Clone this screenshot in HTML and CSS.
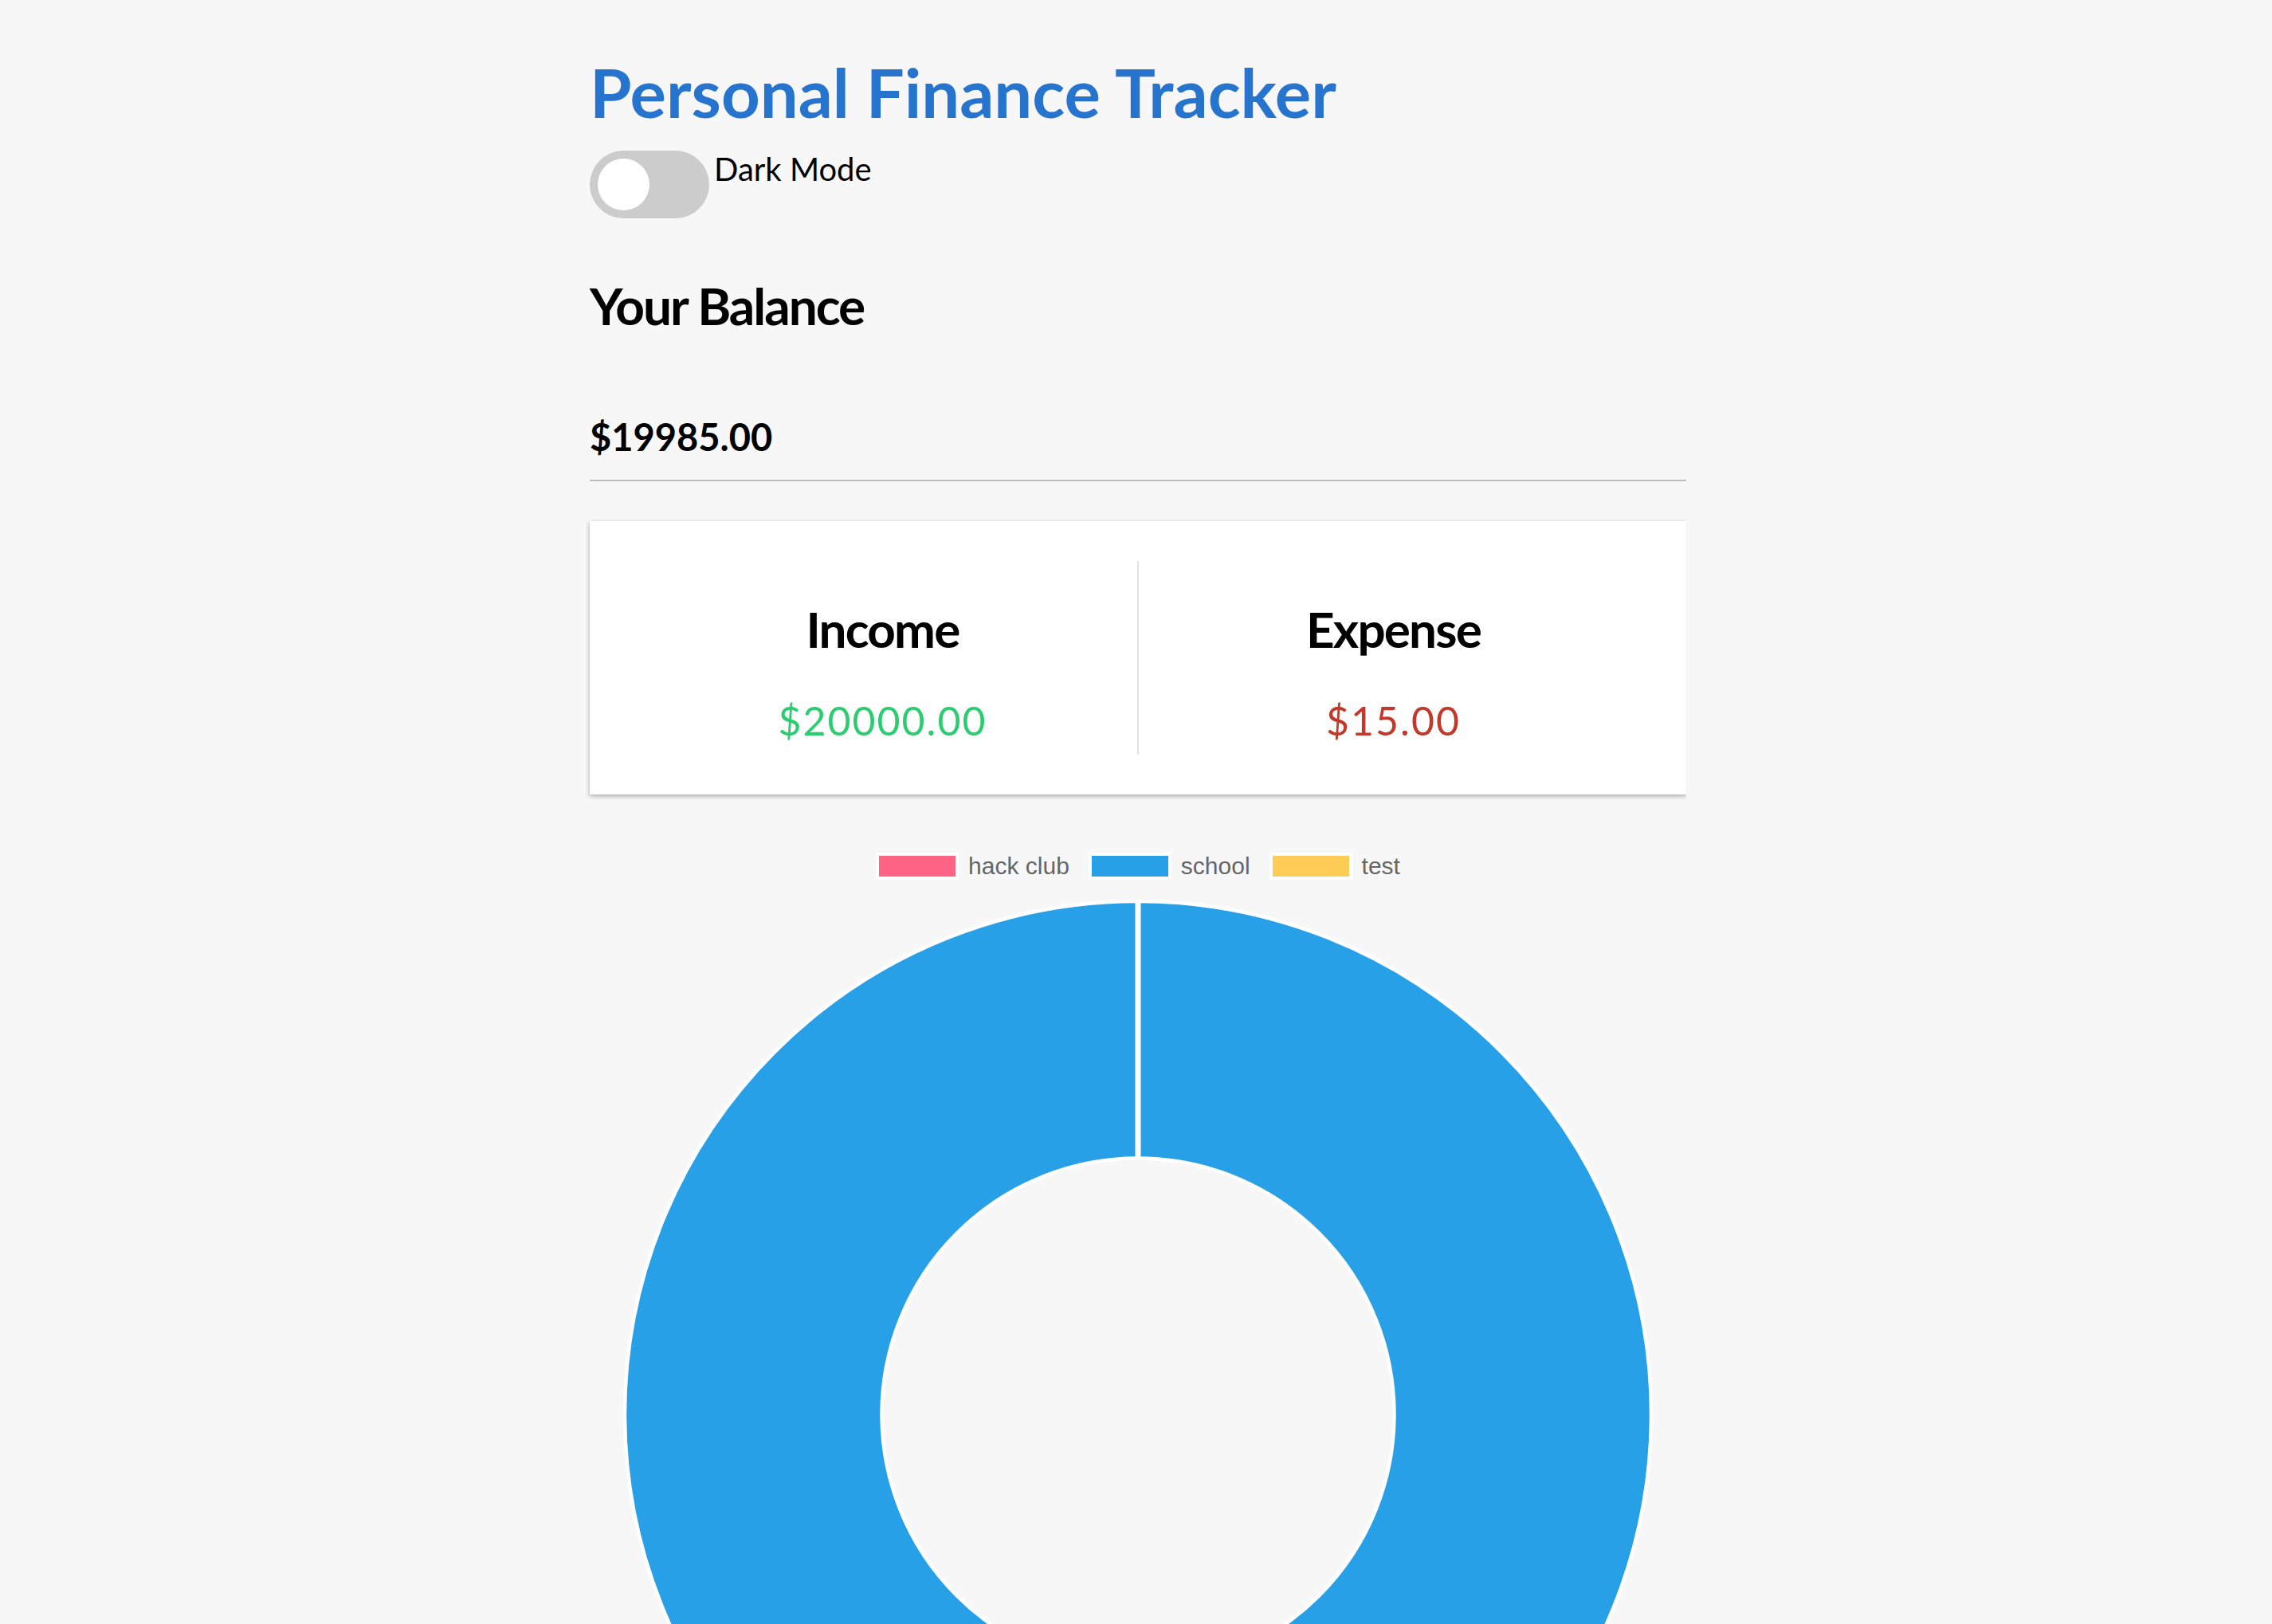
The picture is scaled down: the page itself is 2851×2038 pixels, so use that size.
FILE: index.html
```html
<!DOCTYPE html>
<html lang="en">
<head>
<meta charset="utf-8">
<title>Personal Finance Tracker</title>
<link rel="stylesheet" href="styles.css">
</head>
<body>
<div class="app">
  <h1 class="title">Personal Finance Tracker</h1>
  <div class="mode-row">
    <span class="toggle"><span class="knob"></span></span>
    <span class="mode-label">Dark Mode</span>
  </div>
  <h2 class="balance-title">Your Balance</h2>
  <div class="balance">$19985.00</div>
  <div class="rule"></div>
  <div class="card">
    <div class="col col-left">
      <h4 class="col-title">Income</h4>
      <p class="money plus">$20000.00</p>
    </div>
    <div class="col">
      <h4 class="col-title">Expense</h4>
      <p class="money minus">$15.00</p>
    </div>
  </div>
  <div class="legend">
    <div class="legend-item"><span class="swatch pink"></span><span class="legend-text">hack club</span></div>
    <div class="legend-item"><span class="swatch blue"></span><span class="legend-text">school</span></div>
    <div class="legend-item"><span class="swatch yellow"></span><span class="legend-text">test</span></div>
  </div>
  <div class="chart">
    <svg class="donut" width="1300" height="1300" viewBox="-650 -650 1300 1300">
      <path d="M0,-644 A644,644 0 1,1 0,644 A644,644 0 1,1 0,-644 Z M0,-321.5 A321.5,321.5 0 1,0 0,321.5 A321.5,321.5 0 1,0 0,-321.5 Z" fill="#28a0e8" fill-rule="evenodd" stroke="#ffffff" stroke-width="4.5"/>
      <line x1="0" y1="-646" x2="0" y2="-319" stroke="#ffffff" stroke-width="7"/>
    </svg>
  </div>
</div>
</body>
</html>
```

FILE: styles.css
```css
html, body {
  margin: 0;
  padding: 0;
}

body {
  background: #f7f7f7;
  font-family: Lato, "Open Sans", sans-serif;
  color: #000;
}

.app {
  box-sizing: content-box;
  width: 1376px;
  margin: 0 auto;
  padding: 65px 0 0 5px;
  height: 1973px;
  overflow: hidden;
}

.title {
  margin: 0;
  font-size: 85px;
  line-height: 100px;
  font-weight: 700;
  color: #2674cd;
}

.mode-row {
  display: flex;
  align-items: flex-start;
  gap: 6px;
  margin-top: 24px;
}

.toggle {
  position: relative;
  display: block;
  width: 150px;
  height: 85px;
  border-radius: 43px;
  background: #cccccc;
  flex: none;
}

.knob {
  position: absolute;
  left: 10px;
  top: 10px;
  width: 65px;
  height: 65px;
  border-radius: 50%;
  background: #ffffff;
}

.mode-label {
  font-size: 40px;
  line-height: 46px;
}

.balance-title {
  margin: 72px 0 0;
  font-size: 64px;
  line-height: 1.2;
  font-weight: 700;
  letter-spacing: -2px;
}

.balance {
  margin-top: 97px;
  font-size: 47px;
  line-height: 57px;
  font-weight: 700;
}

.rule {
  margin-top: 25px;
  border-top: 2px solid #bdbdbd;
}

.card {
  display: flex;
  margin-top: 50px;
  padding: 50px 48px;
  background: #ffffff;
  box-shadow: 0 2px 7px rgba(0, 0, 0, 0.14), 0 2px 5px rgba(0, 0, 0, 0.2);
}

.col {
  flex: 1;
  text-align: center;
  padding: 48px 0 13px;
}

.col-left {
  border-right: 2px solid #e2e2e2;
}

.col-title {
  margin: 0 0 48px;
  font-size: 62px;
  line-height: 1.2;
  font-weight: 700;
  letter-spacing: -1.8px;
}

.money {
  margin: 0;
  font-size: 50px;
  line-height: 60px;
  letter-spacing: 2px;
}

.plus {
  color: #2ecc71;
}

.minus {
  color: #c0392b;
}

.legend {
  display: flex;
  justify-content: center;
  gap: 24px;
  margin-top: 73px;
}

.legend-item {
  display: flex;
  align-items: center;
  gap: 12px;
}

.swatch {
  display: block;
  width: 96px;
  height: 26px;
  border: 4px solid #ffffff;
}

.pink {
  background: #ff6384;
}

.blue {
  background: #28a0e8;
}

.yellow {
  background: #ffcd56;
}

.legend-text {
  font-family: "Liberation Sans", Arial, sans-serif;
  font-size: 30px;
  line-height: 34px;
  color: #666666;
}

.chart {
  display: flex;
  justify-content: center;
  margin-top: 21px;
}

.donut {
  display: block;
  flex: none;
}
```
